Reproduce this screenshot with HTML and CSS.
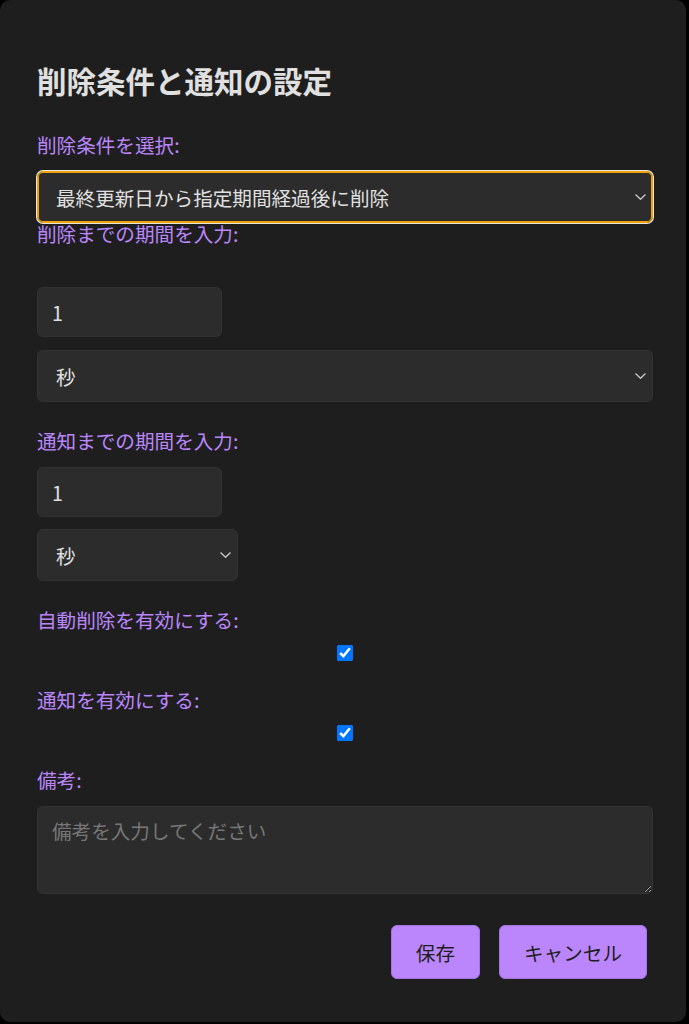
FILE: index.html
```html
<!DOCTYPE html>
<html lang="ja">
<head>
<meta charset="UTF-8">
<meta name="viewport" content="width=device-width, initial-scale=1.0">
<title>削除条件と通知の設定</title>
<link rel="stylesheet" href="styles.css">
</head>
<body>
<div id="dialog">
    <h2 class="title">削除条件と通知の設定</h2>

    <label class="field-label" for="condition">削除条件を選択:</label>
    <select id="condition" class="select-full focused">
        <option>最終更新日から指定期間経過後に削除</option>
        <option>作成日から指定期間経過後に削除</option>
    </select>

    <label class="field-label label-period" for="deletePeriod">削除までの期間を入力:</label>
    <input type="number" id="deletePeriod" class="num-input" value="1">
    <select class="select-full unit-select">
        <option>秒</option>
        <option>分</option>
        <option>時間</option>
        <option>日</option>
    </select>

    <label class="field-label" for="notifyPeriod">通知までの期間を入力:</label>
    <input type="number" id="notifyPeriod" class="num-input" value="1">
    <select class="select-small unit-select">
        <option>秒</option>
        <option>分</option>
        <option>時間</option>
        <option>日</option>
    </select>

    <label class="field-label label-check" for="autoDelete">自動削除を有効にする:</label>
    <div class="check-row">
        <input type="checkbox" id="autoDelete" checked>
    </div>

    <label class="field-label label-check" for="notify">通知を有効にする:</label>
    <div class="check-row">
        <input type="checkbox" id="notify" checked>
    </div>

    <label class="field-label" for="memo">備考:</label>
    <textarea id="memo" placeholder="備考を入力してください"></textarea>

    <div class="button-row">
        <button>保存</button>
        <button>キャンセル</button>
    </div>
</div>
</body>
</html>
```

FILE: styles.css
```css
body{
    margin: 0;
    background-color: #000;
    font-family: "Noto Sans CJK JP", "Noto Sans", sans-serif;
}
#dialog{
    width: 686px;
    height: 1022px;
    box-sizing: border-box;
    padding: 62px 33px 0 37px;
    background-color: #1e1e1e;
    border-radius: 10px;
}
.title{
    margin: 0 0 35px 0;
    font-size: 29.5px;
    line-height: 36px;
    font-weight: bold;
    color: #e0e0e0;
}
.field-label{
    display: block;
    margin-bottom: 14px;
    font-size: 19.6px;
    line-height: 24px;
    color: #bb86fc;
}
.label-period{
    margin-top: -1px;
    margin-bottom: 41px;
}
.label-check{
    margin-bottom: 13px;
}
select, input[type="number"], textarea{
    display: block;
    box-sizing: border-box;
    font-family: inherit;
    font-size: 19.6px;
    color: #e0e0e0;
    background-color: #2c2c2c;
    border: 1px solid #333;
    border-radius: 6px;
    padding: 0 14px;
}
select{
    appearance: none;
    background-image: url("data:image/svg+xml,%3Csvg xmlns='http://www.w3.org/2000/svg' width='11' height='6' viewBox='0 0 11 6'%3E%3Cpath d='M0.5 0.5 L5.5 5.3 L10.5 0.5' fill='none' stroke='%23c8c8c8' stroke-width='1.3'/%3E%3C/svg%3E");
    background-repeat: no-repeat;
    background-position: right 6px center;
    padding-left: 18px;
}
.select-full{
    width: 616px;
    height: 52px;
}
.select-small{
    width: 201px;
    height: 52px;
    margin-top: -1px;
}
.focused{
    border-color: #f0a30a;
    box-shadow: inset 0 0 0 1px #f0a30a, 0 0 0 1px #e6e6e6;
    outline: none;
}
.num-input{
    width: 185px;
    height: 50px;
    margin-bottom: 13px;
}
.unit-select{
    margin-bottom: 27px;
}
.check-row{
    display: flex;
    justify-content: center;
    height: 16px;
    margin-bottom: 27px;
}
.check-row input{
    width: 16px;
    height: 16px;
    margin: 0;
}
textarea{
    width: 616px;
    height: 88px;
    padding: 12px 14px;
    line-height: 24px;
    resize: vertical;
}
textarea::placeholder{
    color: #777;
}
.button-row{
    display: flex;
    justify-content: flex-end;
    gap: 19px;
    margin-top: 31px;
    padding-right: 6px;
}
.button-row button{
    height: 54px;
    padding: 0 24px;
    font-family: inherit;
    font-size: 19.6px;
    color: #1e1e1e;
    background-color: #bb86fc;
    border: 1px solid #a573e6;
    border-radius: 6px;
}
```
